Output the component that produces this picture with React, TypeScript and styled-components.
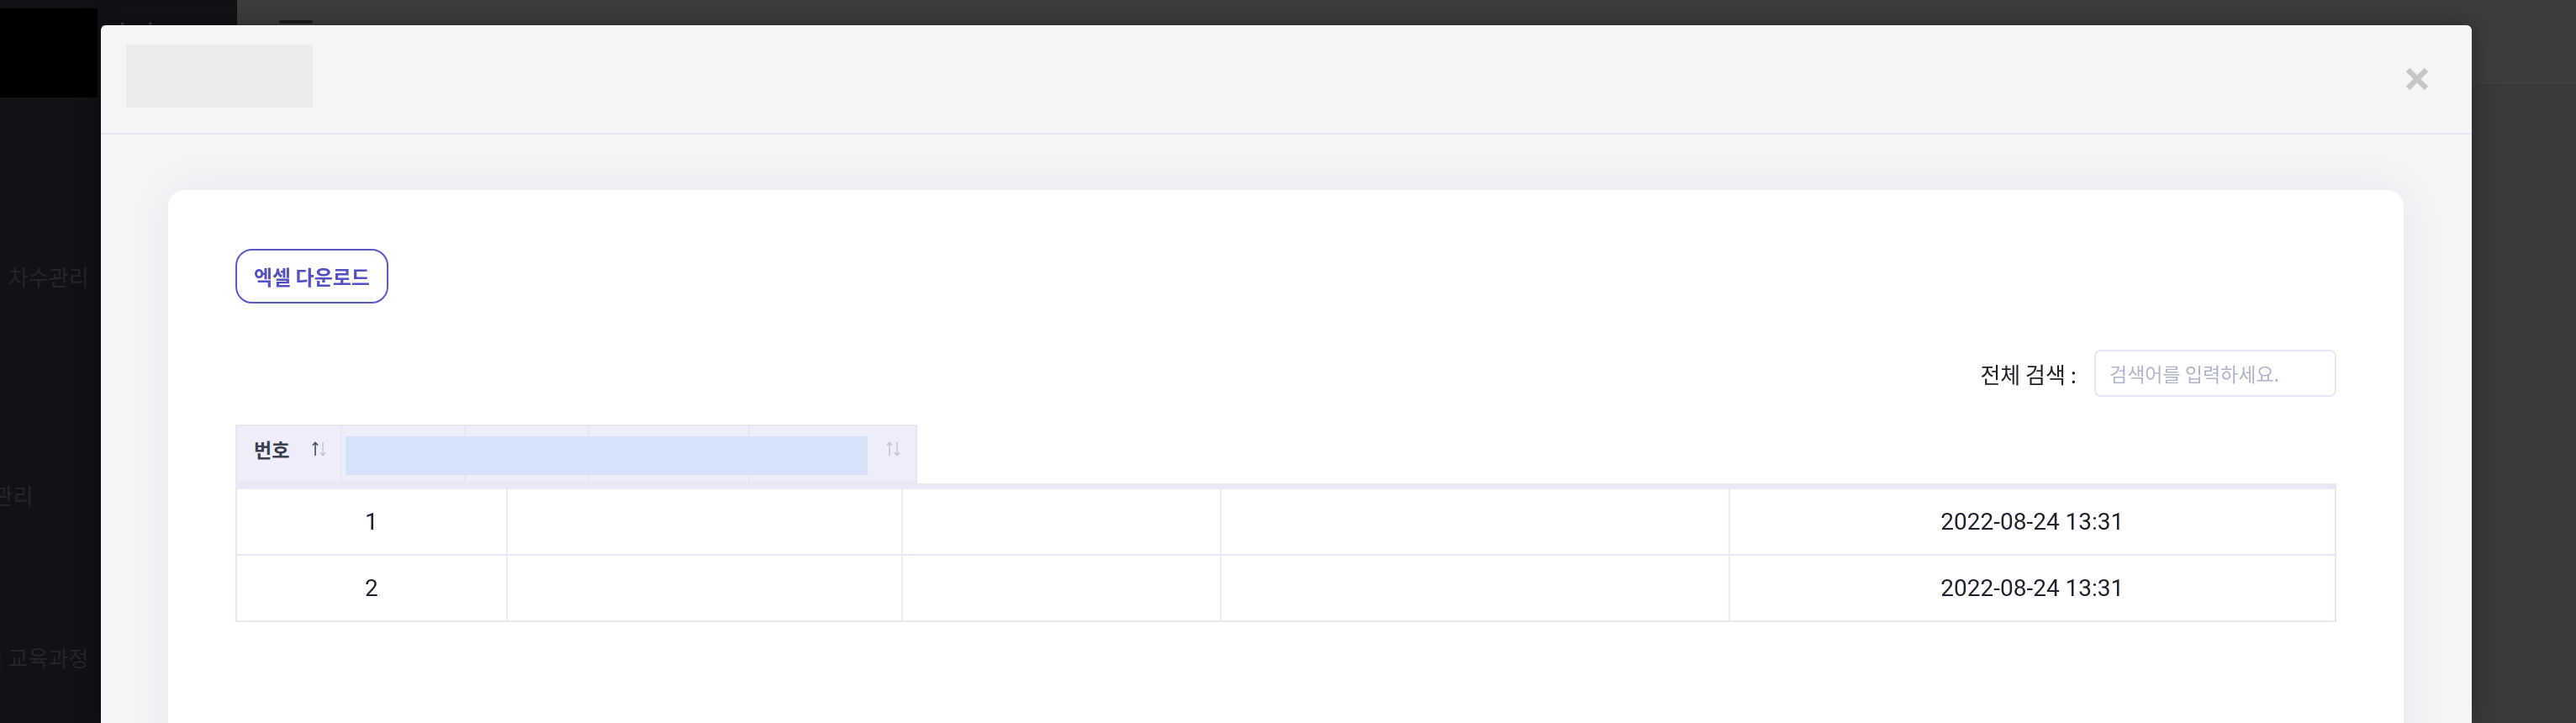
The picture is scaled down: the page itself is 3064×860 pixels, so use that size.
import React from 'react';
import styled, { createGlobalStyle } from 'styled-components';

const GlobalStyle = createGlobalStyle`
  html, body {
    margin: 0;
    padding: 0;
    height: 100%;
    overflow: hidden;
  }
  body {
    font-family: Roboto, 'Noto Sans CJK KR', sans-serif;
  }
  #root {
    height: 100%;
  }
`;

const rows = [
  { no: 1, date: '2022-08-24 13:31' },
  { no: 2, date: '2022-08-24 13:31' },
];

const headerCells = [
  { width: 125, label: '번호', sort: 'active' },
  { width: 147 },
  { width: 147 },
  { width: 191 },
  { width: 199, sort: 'idle' },
];

function SortIcon({ active }: { active?: boolean }) {
  const up = active ? '#474b5b' : '#c6c6d6';
  return (
    <svg width='20' height='20' viewBox='0 0 20 20' fill='none'>
      <path d='M5 2.5V18M1.8 5.8L5 2.5L8.2 5.8' stroke={up} strokeWidth='1.6' />
      <path d='M14 2V17.5M10.8 14.2L14 17.5L17.2 14.2' stroke='#c6c6d6' strokeWidth='1.6' />
    </svg>
  );
}

export default function App() {
  return (
    <>
      <GlobalStyle />
      <Layout>
        <Sidebar>
          <Brand>
            <LogoBox />
            <BrandTitle>관리자</BrandTitle>
          </Brand>
          <Menu>
            <MenuItem $indent={90} $top={195}>
              차수관리
            </MenuItem>
            <MenuItem $indent={24} $top={224}>
              회원관리
            </MenuItem>
            <MenuItem $indent={12} $top={157}>
              온라인 교육과정
            </MenuItem>
          </Menu>
        </Sidebar>
        <Main>
          <Topbar>
            <Hamburger>
              <span />
              <span />
              <span />
            </Hamburger>
          </Topbar>
          <Content />
        </Main>
      </Layout>

      <Modal>
        <ModalHeader>
          <TitleSkeleton />
          <CloseButton aria-label='close'>
            <svg width='26' height='26' viewBox='0 0 26 26'>
              <path d='M2 2L24 24M24 2L2 24' stroke='#c6c6c6' strokeWidth='6.5' />
            </svg>
          </CloseButton>
        </ModalHeader>
        <ModalBody>
          <Card>
            <div>
              <ExcelButton>엑셀 다운로드</ExcelButton>
            </div>
            <SearchRow>
              <SearchLabel>전체 검색 :</SearchLabel>
              <SearchInput placeholder='검색어를 입력하세요.' />
            </SearchRow>

            <HeaderRow>
              {headerCells.map((cell, idx) => (
                <HeaderCell key={idx} $width={cell.width} $end={idx === headerCells.length - 1}>
                  {cell.label && <HeaderLabel>{cell.label}</HeaderLabel>}
                  {cell.sort && <SortIcon active={cell.sort === 'active'} />}
                </HeaderCell>
              ))}
              <HeaderMask />
            </HeaderRow>

            <BodyTable>
              {rows.map((row) => (
                <React.Fragment key={row.no}>
                  <BodyCell>{row.no}</BodyCell>
                  <BodyCell />
                  <BodyCell />
                  <BodyCell />
                  <BodyCell $last>{row.date}</BodyCell>
                </React.Fragment>
              ))}
            </BodyTable>
          </Card>
        </ModalBody>
      </Modal>
    </>
  );
}

const Layout = styled.div`
  display: flex;
  height: 860px;
`;

const Sidebar = styled.aside`
  width: 282px;
  flex-shrink: 0;
  background: #111116;
  overflow: hidden;
`;

const Brand = styled.div`
  display: flex;
  align-items: flex-start;
  padding-top: 10px;
`;

const LogoBox = styled.div`
  position: relative;
  z-index: 1;
  width: 116px;
  height: 106px;
  background: #000;
  flex-shrink: 0;
`;

const BrandTitle = styled.div`
  margin: 4px 0 0 -34px;
  font-family: 'Noto Sans CJK KR', sans-serif;
  font-size: 38px;
  color: #3a3a3f;
  white-space: nowrap;
`;

const Menu = styled.nav`
  display: flex;
  flex-direction: column;
  margin-left: -80px;
`;

const MenuItem = styled.div<{ $indent: number; $top: number }>`
  margin-top: ${(p) => p.$top}px;
  padding-left: ${(p) => p.$indent}px;
  font-family: 'Noto Sans CJK KR', sans-serif;
  font-size: 26px;
  line-height: 36px;
  color: #25252a;
  white-space: nowrap;
`;

const Main = styled.div`
  flex: 1;
  display: flex;
  flex-direction: column;
`;

const Topbar = styled.header`
  height: 102px;
  box-sizing: border-box;
  background: #3d3d3d;
  border-bottom: 1px solid #343434;
  padding: 24px 0 0 50px;
`;

const Hamburger = styled.div`
  display: flex;
  flex-direction: column;
  gap: 8px;

  span {
    display: block;
    width: 40px;
    height: 4px;
    border-radius: 2px;
    background: #1c1c1f;
  }
`;

const Content = styled.div`
  flex: 1;
  background: #3a3a3a;
`;

const Modal = styled.div`
  position: fixed;
  left: 120px;
  top: 30px;
  width: 2820px;
  bottom: 0;
  background: #f4f5f7;
  border-radius: 6px 6px 0 0;
  box-shadow: 0 0 30px rgba(0, 0, 0, 0.35);
  display: flex;
  flex-direction: column;
  overflow: hidden;
`;

const ModalHeader = styled.div`
  height: 128px;
  flex-shrink: 0;
  display: flex;
  align-items: center;
  justify-content: space-between;
  padding: 0 52px 0 30px;
  border-bottom: 2px solid #e6e6f4;
`;

const TitleSkeleton = styled.div`
  width: 222px;
  height: 75px;
  margin-bottom: 8px;
  background: #ebebeb;
`;

const CloseButton = styled.button`
  display: flex;
  width: 26px;
  height: 26px;
  padding: 0;
  border: none;
  background: transparent;
  cursor: pointer;
`;

const ModalBody = styled.div`
  flex: 1;
  padding: 66px 81px 0 80px;
`;

const Card = styled.section`
  min-height: 900px;
  padding: 70px 80px;
  background: #fff;
  border-radius: 20px;
  box-shadow: 0 0 60px rgba(20, 30, 60, 0.06);
`;

const ExcelButton = styled.button`
  display: inline-flex;
  align-items: center;
  justify-content: center;
  height: 65px;
  box-sizing: border-box;
  padding: 0 20px;
  border: 2px solid #5b58c7;
  border-radius: 20px;
  background: #fff;
  color: #5451c3;
  font-family: 'Noto Sans CJK KR', sans-serif;
  font-size: 24px;
  font-weight: 700;
  cursor: pointer;
`;

const SearchRow = styled.div`
  display: flex;
  justify-content: flex-end;
  align-items: center;
  gap: 21px;
  margin-top: 55px;
`;

const SearchLabel = styled.label`
  font-family: 'Noto Sans CJK KR', sans-serif;
  font-size: 26px;
  color: #23232a;
`;

const SearchInput = styled.input`
  width: 288px;
  height: 56px;
  box-sizing: border-box;
  padding: 0 16px;
  border: 2px solid #e6e6f5;
  border-radius: 8px;
  font-family: 'Noto Sans CJK KR', sans-serif;
  font-size: 23px;
  outline: none;

  &::placeholder {
    color: #b1b5cb;
  }
`;

const HeaderRow = styled.div`
  position: relative;
  display: inline-flex;
  margin-top: 33px;
  border-top: 2px solid #e6e6f4;
  border-left: 2px solid #e6e6f4;
  background: #eeeefb;
`;

const HeaderCell = styled.div<{ $width: number; $end?: boolean }>`
  width: ${(p) => p.$width}px;
  height: 68px;
  box-sizing: border-box;
  display: flex;
  align-items: center;
  justify-content: ${(p) => (p.$end ? 'flex-end' : 'flex-start')};
  gap: 26px;
  padding: 0 ${(p) => (p.$end ? 16 : 0)}px 12px 20px;
  border-right: 2px solid #e6e6f4;
  border-bottom: 2px solid #e6e6f4;
`;

const HeaderLabel = styled.span`
  font-family: 'Noto Sans CJK KR', sans-serif;
  font-size: 23px;
  font-weight: 600;
  color: #3b3f4f;
`;

const HeaderMask = styled.div`
  position: absolute;
  left: 129px;
  top: 12px;
  width: 621px;
  height: 46px;
  background: #d6e2fa;
`;

const BodyTable = styled.div`
  display: grid;
  grid-template-columns: 322fr 471fr 379fr 605fr 720fr;
  border-top: 7px solid #e9e9f6;
  border-left: 2px solid #e6e6f4;
  border-right: 2px solid #e6e6f4;
`;

const BodyCell = styled.div<{ $last?: boolean }>`
  height: 79px;
  box-sizing: border-box;
  display: flex;
  align-items: center;
  justify-content: center;
  border-bottom: 2px solid #e6e6f4;
  border-right: ${(p) => (p.$last ? 'none' : '2px solid #ececf7')};
  font-size: 28px;
  color: #1f2330;
`;
